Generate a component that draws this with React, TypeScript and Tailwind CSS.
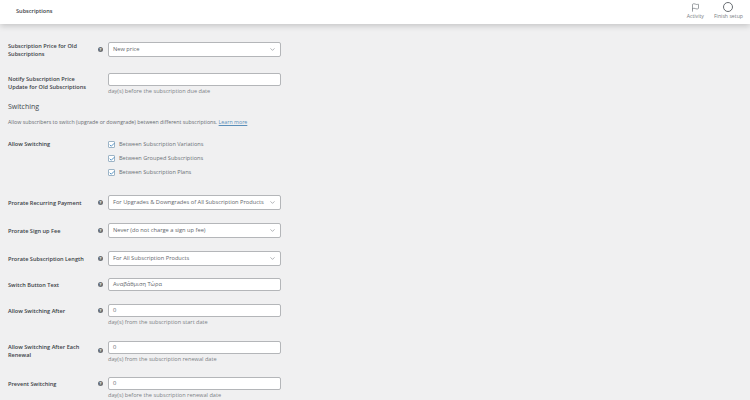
import { Flag, ChevronDown, Check } from "lucide-react";

interface FieldProps {
    label: string;
    help?: boolean;
    kind: "select" | "input";
    value?: string;
    note?: string;
    shift?: boolean;
    className: string;
}

function Field({ label, help = true, kind, value, note, shift = false, className }: FieldProps) {
    const height = kind === "select" ? "h-[15px]" : "h-[13px]";
    const offset = shift ? "mt-[3px]" : "";

    return (
        <div className={`flex items-start pl-2 ${className}`}>
            <div className={`w-[90px] pr-[8px] flex items-center font-semibold text-[#3a4146] text-[5.6px] leading-[8px] shrink-0 ${height} ${offset}`}>
                <span>{label}</span>
            </div>
            <div className={`w-[10px] flex items-center shrink-0 ${height} ${offset}`}>
                {help && (
                    <span className="w-[5px] h-[5px] rounded-full bg-[#686d72] text-white text-[4px] leading-[5px] text-center font-bold">?</span>
                )}
            </div>
            <div className="w-[173px] shrink-0">
                <div className={`bg-white border border-[#b4b6b9] rounded-[2px] flex items-center justify-between pl-[4px] pr-[4px] text-[#5f666c] text-[5.7px] ${height}`}>
                    <span className="whitespace-nowrap">{value}</span>
                    {kind === "select" && <ChevronDown size={7} strokeWidth={1.5} className="text-[#50575e] shrink-0" />}
                </div>
                {note && <p className="mt-[1px] text-[5.6px] leading-[9px] text-[#7c8186]">{note}</p>}
            </div>
        </div>
    );
}

function Choice({ label, className }: { label: string; className: string }) {
    return (
        <div className={`flex items-center gap-[4px] h-[7px] ${className}`}>
            <span className="w-[7px] h-[7px] bg-white border border-[#9db4c6] rounded-[1px] flex items-center justify-center shrink-0">
                <Check size={6} strokeWidth={3} className="text-[#2271b1] shrink-0" />
            </span>
            <span className="text-[5.6px] text-[#6a7076]">{label}</span>
        </div>
    );
}

export default function App() {
    return (
        <div className="w-[750px] h-[400px] overflow-hidden bg-[#f0f0f1] font-['Open_Sans',sans-serif]">
            <header className="h-[24px] bg-white flex items-start justify-between pl-[16px] pr-[7px] shadow-[0_2px_6px_rgba(0,0,0,0.18)]">
                <span className="mt-[7px] text-[5.6px] leading-[8px] font-semibold text-[#3a4146]">Subscriptions</span>
                <div className="flex items-start gap-[10px] pt-[2px]">
                    <div className="flex flex-col items-center text-[#777c81]">
                        <div className="h-[10px] flex items-center">
                            <Flag size={9} strokeWidth={1.5} className="text-[#50575e]" />
                        </div>
                        <span className="mt-[1px] text-[5.2px] leading-[7px]">Activity</span>
                    </div>
                    <div className="flex flex-col items-center text-[#777c81]">
                        <span className="w-[10px] h-[10px] rounded-full border border-[#686d72]" />
                        <span className="mt-[1px] text-[5.2px] leading-[7px]">Finish setup</span>
                    </div>
                </div>
            </header>

            <Field className="mt-[18px]" label="Subscription Price for Old Subscriptions" kind="select" value="New price" />
            <Field className="mt-[16px]" shift label="Notify Subscription Price Update for Old Subscriptions" help={false} kind="input" note="day(s) before the subscription due date" />

            <h2 className="mt-[5px] pl-2 text-[7px] leading-[12px] font-medium text-[#42494e]">Switching</h2>
            <p className="mt-[5px] pl-2 text-[5.3px] leading-[9px] text-[#686d72]">
                Allow subscribers to switch (upgrade or downgrade) between different subscriptions. <span className="text-[#5b8fb9] underline">Learn more</span>
            </p>

            <div className="mt-[13px] flex items-start pl-2">
                <div className="w-[100px] text-[5.6px] leading-[9px] font-semibold text-[#3a4146]">Allow Switching</div>
                <div className="pt-[1px]">
                    <Choice label="Between Subscription Variations" className="mt-0" />
                    <Choice label="Between Grouped Subscriptions" className="mt-[7px]" />
                    <Choice label="Between Subscription Plans" className="mt-[7px]" />
                </div>
            </div>

            <Field className="mt-[19px]" label="Prorate Recurring Payment" kind="select" value="For Upgrades & Downgrades of All Subscription Products" />
            <Field className="mt-[13px]" label="Prorate Sign up Fee" kind="select" value="Never (do not charge a sign up fee)" />
            <Field className="mt-[13px]" label="Prorate Subscription Length" kind="select" value="For All Subscription Products" />
            <Field className="mt-[12px]" label="Switch Button Text" kind="input" value="Αναβάθμιση Τώρα" />
            <Field className="mt-[13px]" label="Allow Switching After" kind="input" value="0" note="day(s) from the subscription start date" />
            <Field className="mt-[14px]" shift label="Allow Switching After Each Renewal" kind="input" value="0" note="day(s) from the subscription renewal date" />
            <Field className="mt-[13px]" label="Prevent Switching" kind="input" value="0" note="day(s) before the subscription renewal date" />
        </div>
    );
}
